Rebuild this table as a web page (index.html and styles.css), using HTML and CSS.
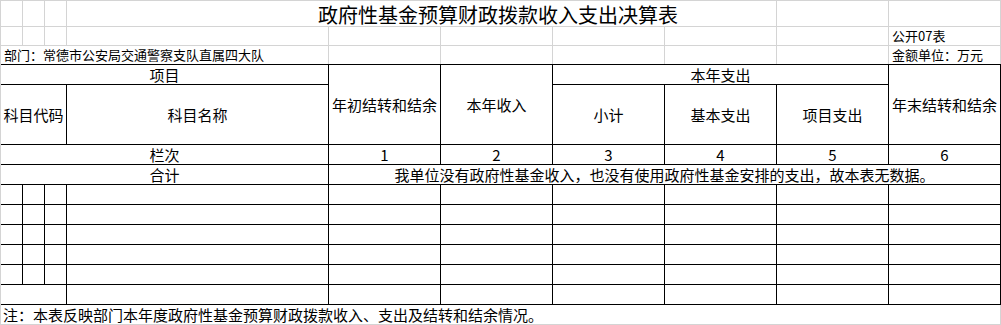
FILE: index.html
```html
<!DOCTYPE html>
<html lang="zh-CN">
<head>
<meta charset="utf-8">
<title>政府性基金预算财政拨款收入支出决算表</title>
<link rel="stylesheet" href="styles.css">
</head>
<body>
<div class="sheet">
  <div class="top">
    <div></div><div></div><div></div>
    <div class="title">政府性基金预算财政拨款收入支出决算表</div>
    <div></div><div></div>

    <div></div><div></div><div></div><div></div><div></div><div></div><div></div><div></div><div></div>
    <div class="small">公开07表</div>

    <div class="dept small">部门：常德市公安局交通警察支队直属四大队</div>
    <div></div><div></div><div></div><div></div><div></div>
    <div class="small">金额单位：万元</div>
  </div>

  <div class="main">
    <div class="c h-item">项目</div>
    <div class="c h-begin">年初结转和结余</div>
    <div class="c h-income">本年收入</div>
    <div class="c h-spend">本年支出</div>
    <div class="c h-end">年末结转和结余</div>
    <div class="c h-code">科目代码</div>
    <div class="c h-name">科目名称</div>
    <div class="c h-sub">小计</div>
    <div class="c h-basic">基本支出</div>
    <div class="c h-proj">项目支出</div>

    <div class="c r3-label">栏次</div>
    <div class="c r3 n1">1</div>
    <div class="c r3 n2">2</div>
    <div class="c r3 n3">3</div>
    <div class="c r3 n4">4</div>
    <div class="c r3 n5">5</div>
    <div class="c r3 n6">6</div>

    <div class="c r4-label">合计</div>
    <div class="c r4-msg">我单位没有政府性基金收入，也没有使用政府性基金安排的支出，故本表无数据。</div>

    <div></div><div></div><div></div><div></div><div></div><div></div><div></div><div></div><div></div><div></div>
    <div></div><div></div><div></div><div></div><div></div><div></div><div></div><div></div><div></div><div></div>
    <div></div><div></div><div></div><div></div><div></div><div></div><div></div><div></div><div></div><div></div>
    <div></div><div></div><div></div><div></div><div></div><div></div><div></div><div></div><div></div><div></div>
    <div></div><div></div><div></div><div></div><div></div><div></div><div></div><div></div><div></div><div></div>
    <div class="span3"></div><div></div><div></div><div></div><div></div><div></div><div></div><div></div>
  </div>

  <div class="note">注：本表反映部门本年度政府性基金预算财政拨款收入、支出及结转和结余情况。</div>
</div>
</body>
</html>
```

FILE: styles.css
```css
html, body {
  margin: 0;
  padding: 0;
  background: #ffffff;
}

body {
  font-family: "Noto Sans CJK SC", "Noto Sans", sans-serif;
  color: #000000;
}

.sheet {
  width: 1001px;
}

/* top area: light spreadsheet gridlines */
.top {
  display: grid;
  grid-template-columns: 21px 21px 21px 261px repeat(6, 111px);
  grid-template-rows: 25px 18px 18px;
  gap: 1px;
  background: #d4d4d4;
  padding: 1px 1px 0 1px;
  width: 1001px;
  box-sizing: border-box;
}

.top > div {
  background: #ffffff;
  overflow: visible;
  white-space: nowrap;
}

.title {
  grid-column: 4 / 9;
  font-size: 20px;
  line-height: 25px;
  padding-left: 251px;
  padding-top: 1px;
}

.small {
  font-size: 13px;
  line-height: 18px;
  padding-left: 3px;
}

.dept {
  grid-column: 1 / 5;
  padding-left: 3px;
}

/* main table: black borders */
.main {
  display: grid;
  grid-template-columns: 21px 21px 21px 261px repeat(6, 111px);
  grid-template-rows: 19px 59px 19px 19px repeat(6, 19px);
  gap: 1px;
  background: #000000;
  border-left: 1px solid #d4d4d4;
  padding: 1px 1px 1px 0;
  width: 1001px;
  box-sizing: border-box;
}

.main > div {
  background: #ffffff;
}

.c {
  display: flex;
  align-items: center;
  justify-content: center;
  font-size: 15px;
  line-height: 19px;
  white-space: nowrap;
}

.h-item { grid-column: 1 / 5; grid-row: 1; }
.h-begin { grid-column: 5; grid-row: 1 / 3; }
.h-income { grid-column: 6; grid-row: 1 / 3; }
.h-spend { grid-column: 7 / 10; grid-row: 1; }
.h-end { grid-column: 10; grid-row: 1 / 3; }
.h-code { grid-column: 1 / 4; grid-row: 2; }
.h-name { grid-column: 4; grid-row: 2; }
.h-sub { grid-column: 7; grid-row: 2; }
.h-basic { grid-column: 8; grid-row: 2; }
.h-proj { grid-column: 9; grid-row: 2; }

.r3-label { grid-column: 1 / 5; grid-row: 3; }
.r3 { grid-row: 3; }
.n1 { grid-column: 5; }
.n2 { grid-column: 6; }
.n3 { grid-column: 7; }
.n4 { grid-column: 8; }
.n5 { grid-column: 9; }
.n6 { grid-column: 10; }

.r4-label { grid-column: 1 / 5; grid-row: 4; }
.r4-msg { grid-column: 5 / 11; grid-row: 4; }

.span3 { grid-column: span 3; }

/* note row */
.note {
  height: 19px;
  border-left: 1px solid #d4d4d4;
  border-right: 1px solid #d4d4d4;
  border-bottom: 1px solid #d4d4d4;
  font-size: 15px;
  line-height: 19px;
  padding-left: 2px;
  white-space: nowrap;
}
```
